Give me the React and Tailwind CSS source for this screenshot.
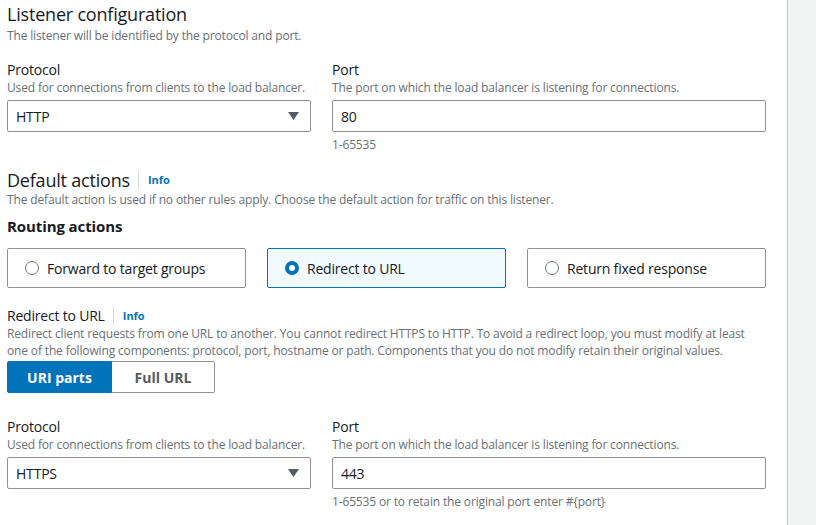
import React from "react";

const font = { fontFamily: '"Open Sans", "Noto Sans", Arial, sans-serif' };

function Caret() {
  return (
    <svg width="11" height="8" viewBox="0 0 11 8" className="shrink-0">
      <path d="M0 0 H11 L5.5 8 Z" fill="#545b64" />
    </svg>
  );
}

function Select({ value }) {
  return (
    <div className="flex items-center justify-between h-[32px] border border-[#8d9396] rounded-[2px] pl-[8px] pr-[11px] text-[14px] tracking-[-0.2px] text-[#16191f] bg-white">
      <span>{value}</span>
      <Caret />
    </div>
  );
}

function Input({ value }) {
  return (
    <div className="flex items-center h-[32px] border border-[#8d9396] rounded-[2px] pl-[8px] text-[14px] tracking-[-0.2px] text-[#16191f] bg-white">
      {value}
    </div>
  );
}

function Field({ label, desc, children, hint }) {
  return (
    <div className="flex flex-col">
      <div className="text-[14px] leading-[20px] tracking-[-0.2px] text-[#16191f]">{label}</div>
      <div className="text-[12px] leading-[16px] tracking-[-0.15px] text-[#687078]">{desc}</div>
      <div className="mt-[4px]">{children}</div>
      {hint && (
        <div className="mt-[5px] text-[12px] leading-[16px] tracking-[-0.15px] text-[#687078]">{hint}</div>
      )}
    </div>
  );
}

function Radio({ checked }) {
  if (checked) {
    return (
      <span className="w-[14px] h-[14px] rounded-full bg-[#0073bb] flex items-center justify-center shrink-0">
        <span className="w-[6px] h-[6px] rounded-full bg-white" />
      </span>
    );
  }
  return <span className="w-[14px] h-[14px] rounded-full border-[1.5px] border-[#687078] shrink-0 box-border" />;
}

function Card({ label, checked }) {
  return (
    <div
      className={
        checked
          ? "flex items-center gap-[8px] h-[40px] pl-[17px] rounded-[2px] border border-[#0073bb] bg-[#f1faff] text-[14px] tracking-[-0.2px] text-[#16191f]"
          : "flex items-center gap-[8px] h-[40px] pl-[17px] rounded-[2px] border border-[#8d9396] bg-white text-[14px] tracking-[-0.2px] text-[#16191f]"
      }
    >
      <Radio checked={checked} />
      <span>{label}</span>
    </div>
  );
}

function Info() {
  return (
    <>
      <span className="w-px h-[18px] bg-[#d5dbdb] ml-[8px] mr-[9px]" />
      <span className="text-[11px] font-bold text-[#0073bb]">Info</span>
    </>
  );
}

export default function App() {
  return (
    <div className="flex w-[816px] h-[525px] bg-white overflow-hidden" style={font}>
      <div className="w-[787px] shrink-0 pl-[7px] pt-[3px]">
        <div className="w-[759px]">
          <div className="text-[18px] leading-[22px] tracking-[-0.2px] text-[#16191f]">Listener configuration</div>
          <div className="mt-[3px] text-[12px] leading-[16px] tracking-[-0.15px] text-[#687078]">
            The listener will be identified by the protocol and port.
          </div>

          <div className="mt-[16px] grid grid-cols-[304px_434px] gap-x-[21px]">
            <Field label="Protocol" desc="Used for connections from clients to the load balancer.">
              <Select value="HTTP" />
            </Field>
            <Field
              label="Port"
              desc="The port on which the load balancer is listening for connections."
              hint="1-65535"
            >
              <Input value="80" />
            </Field>
          </div>

          <div className="mt-[15px] flex items-center h-[24px]">
            <span className="text-[18px] leading-[22px] tracking-[-0.2px] text-[#16191f]">Default actions</span>
            <Info />
          </div>
          <div className="text-[12px] leading-[16px] tracking-[-0.15px] text-[#687078]">
            The default action is used if no other rules apply. Choose the default action for traffic on this listener.
          </div>

          <div className="mt-[8px] text-[15px] leading-[20px] font-bold tracking-[-0.1px] text-[#16191f]">Routing actions</div>

          <div className="mt-[12px] grid grid-cols-3 gap-x-[21px]">
            <Card label="Forward to target groups" />
            <Card label="Redirect to URL" checked />
            <Card label="Return fixed response" />
          </div>

          <div className="mt-[18px] flex items-center h-[20px]">
            <span className="text-[14px] leading-[20px] tracking-[-0.2px] text-[#16191f]">Redirect to URL</span>
            <Info />
          </div>
          <div className="-mt-[1px] text-[12px] leading-[17px] tracking-[-0.15px] text-[#687078]">
            Redirect client requests from one URL to another. You cannot redirect HTTPS to HTTP. To avoid a redirect loop, you must modify at least one of the following components: protocol, port, hostname or path. Components that you do not modify retain their original values.
          </div>

          <div className="mt-[2px] flex w-[208px] h-[32px] text-[14px] font-bold">
            <div className="w-[105px] flex items-center justify-center bg-[#0073bb] text-white border border-[#0073bb] rounded-l-[2px]">
              URI parts
            </div>
            <div className="flex-1 flex items-center justify-center bg-white text-[#545b64] border border-l-0 border-[#8d9396] rounded-r-[2px]">
              Full URL
            </div>
          </div>

          <div className="mt-[24px] grid grid-cols-[304px_434px] gap-x-[21px]">
            <Field label="Protocol" desc="Used for connections from clients to the load balancer.">
              <Select value="HTTPS" />
            </Field>
            <Field
              label="Port"
              desc="The port on which the load balancer is listening for connections."
              hint="1-65535 or to retain the original port enter #{port}"
            >
              <Input value="443" />
            </Field>
          </div>
        </div>
      </div>
      <div className="flex-1 border-l border-[#c6c6c6] bg-[#f2f3f3]" />
    </div>
  );
}
